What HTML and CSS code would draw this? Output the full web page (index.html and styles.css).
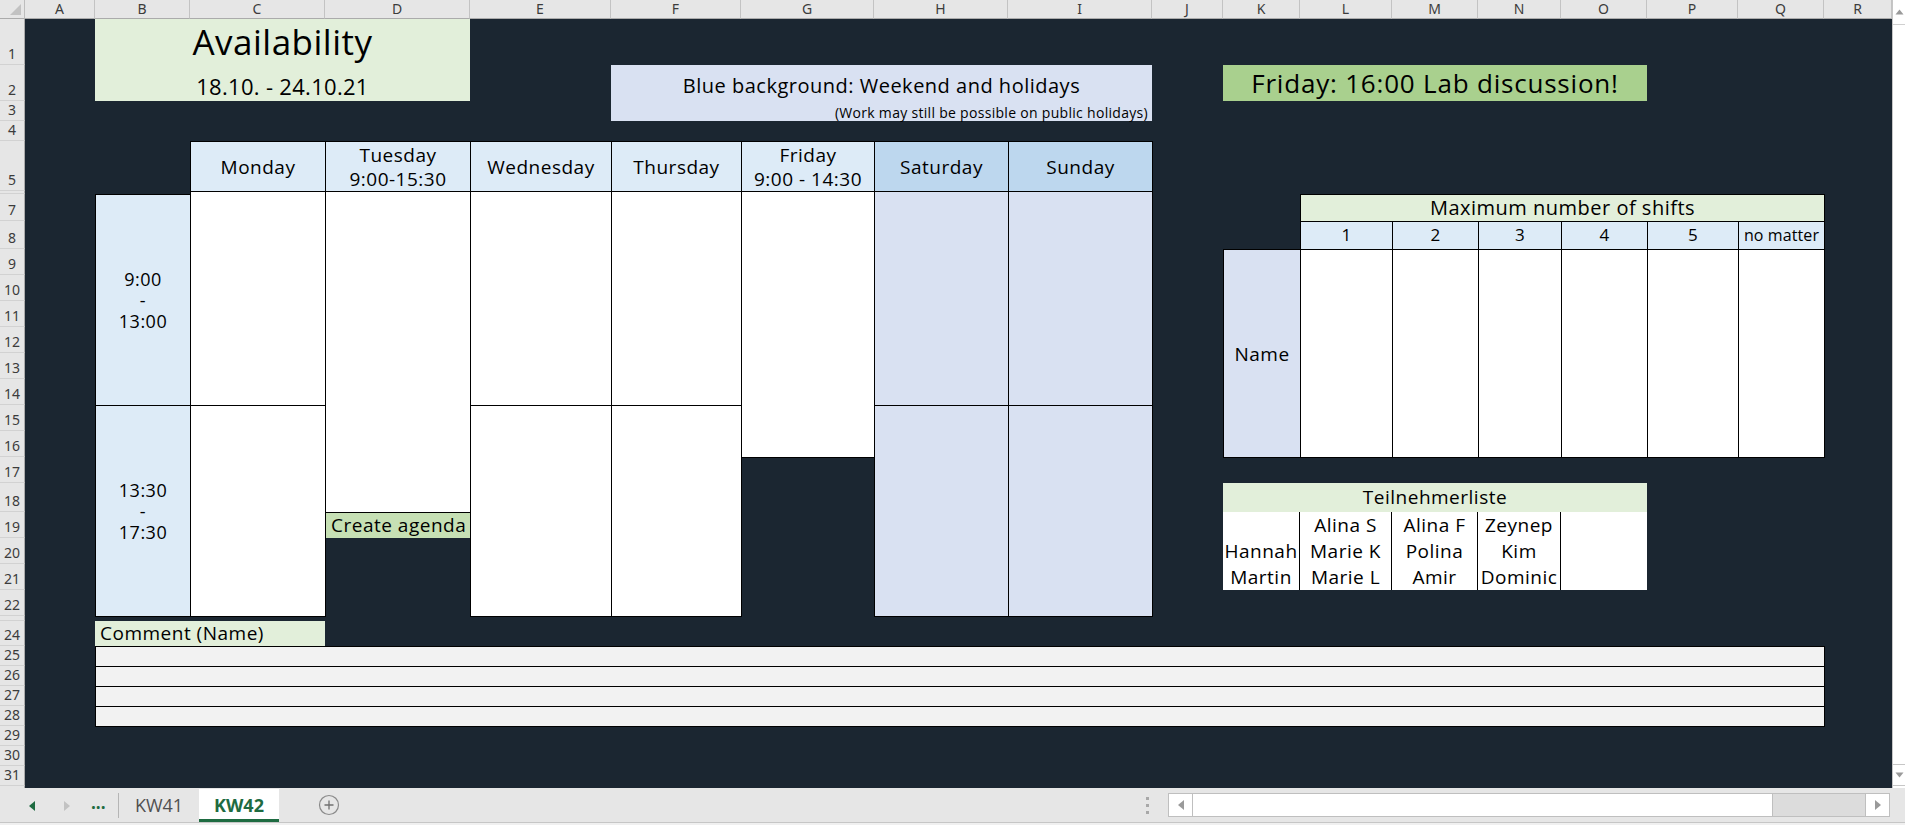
FILE: index.html
```html
<!DOCTYPE html>
<html lang="en">
<head>
<meta charset="utf-8">
<title>Availability – KW42</title>
<link rel="stylesheet" href="styles.css">
</head>
<body>
<div class="app">
  <div class="sheet">
    <div class="corner"><svg width="24" height="18" viewBox="0 0 24 18"><polygon points="21,4 21,15 10,15" fill="#c2c2c2"/></svg></div>
    <div class="ch">A</div><div class="ch">B</div><div class="ch">C</div><div class="ch">D</div><div class="ch">E</div><div class="ch">F</div><div class="ch">G</div><div class="ch">H</div><div class="ch">I</div><div class="ch">J</div><div class="ch">K</div><div class="ch">L</div><div class="ch">M</div><div class="ch">N</div><div class="ch">O</div><div class="ch">P</div><div class="ch">Q</div><div class="ch">R</div>

    <div class="rh">1</div><div class="rh">2</div><div class="rh">3</div><div class="rh">4</div><div class="rh">5</div><div class="rh"></div>
    <div class="rh">7</div><div class="rh">8</div><div class="rh">9</div><div class="rh">10</div><div class="rh">11</div><div class="rh">12</div><div class="rh">13</div><div class="rh">14</div><div class="rh">15</div><div class="rh">16</div><div class="rh">17</div><div class="rh">18</div><div class="rh">19</div><div class="rh">20</div><div class="rh">21</div><div class="rh">22</div>
    <div class="rh"></div><div class="rh">24</div><div class="rh">25</div><div class="rh">26</div><div class="rh">27</div><div class="rh">28</div><div class="rh">29</div><div class="rh">30</div><div class="rh">31</div><div class="rh"></div>

    <div class="vscroll">
      <div class="vbtn vup"><svg width="9" height="6" viewBox="0 0 9 6"><polygon points="4.5,0.5 8.5,5.5 0.5,5.5" fill="#9a9a9a"/></svg></div>
      <div class="vtrack"></div>
      <div class="vbtn vdown"><svg width="9" height="6" viewBox="0 0 9 6"><polygon points="0.5,0.5 8.5,0.5 4.5,5.5" fill="#9a9a9a"/></svg></div>
    </div>

    <!-- title & notes -->
    <div class="title">
      <div class="t-main">Availability</div>
      <div class="t-dates">18.10. - 24.10.21</div>
    </div>
    <div class="legend">
      <div class="lg-main">Blue background: Weekend and holidays</div>
      <div class="lg-sub">(Work may still be possible on public holidays)</div>
    </div>
    <div class="fri-note">Friday: 16:00 Lab discussion!</div>

    <!-- day headers -->
    <div class="bx dh colC">Monday</div>
    <div class="bx dh colD">Tuesday<br>9:00-15:30</div>
    <div class="bx dh colE">Wednesday</div>
    <div class="bx dh colF">Thursday</div>
    <div class="bx dh colG">Friday<br>9:00 - 14:30</div>
    <div class="bx dh we colH">Saturday</div>
    <div class="bx dh we colI">Sunday</div>

    <!-- time slots -->
    <div class="bx time colB time-am">9:00<br>-<br>13:00</div>
    <div class="bx time colB pm">13:30<br>-<br>17:30</div>

    <!-- schedule cells -->
    <div class="agenda">Create agenda</div>
    <div class="bx day colC am"></div>
    <div class="bx day colC pm"></div>
    <div class="bx day colD tue-long"></div>
    <div class="bx day colE am"></div>
    <div class="bx day colE pm"></div>
    <div class="bx day colF am"></div>
    <div class="bx day colF pm"></div>
    <div class="bx day colG fri-long"></div>
    <div class="bx day off colH am"></div>
    <div class="bx day off colH pm"></div>
    <div class="bx day off colI am"></div>
    <div class="bx day off colI pm"></div>

    <!-- comments -->
    <div class="cm-label">Comment (Name)</div>
    <div class="bx cm-row cm1"></div>
    <div class="bx cm-row cm2"></div>
    <div class="bx cm-row cm3"></div>
    <div class="bx cm-row cm4"></div>

    <!-- maximum shifts -->
    <div class="bx mx-head">Maximum number of shifts</div>
    <div class="bx mx-num colL">1</div>
    <div class="bx mx-num colM">2</div>
    <div class="bx mx-num colN">3</div>
    <div class="bx mx-num colO">4</div>
    <div class="bx mx-num colP">5</div>
    <div class="bx mx-num small colQ">no matter</div>
    <div class="bx mx-name">Name</div>
    <div class="bx mx-cell colL"></div>
    <div class="bx mx-cell colM"></div>
    <div class="bx mx-cell colN"></div>
    <div class="bx mx-cell colO"></div>
    <div class="bx mx-cell colP"></div>
    <div class="bx mx-cell colQ"></div>

    <!-- participants -->
    <div class="tl-head">Teilnehmerliste</div>
    <div class="tl-col sep colK"><span></span><span>Hannah</span><span>Martin</span></div>
    <div class="tl-col sep colL"><span>Alina S</span><span>Marie K</span><span>Marie L</span></div>
    <div class="tl-col sep colM"><span>Alina F</span><span>Polina</span><span>Amir</span></div>
    <div class="tl-col sep colN"><span>Zeynep</span><span>Kim</span><span>Dominic</span></div>
    <div class="tl-col colO"><span></span><span></span><span></span></div>
  </div>

  <div class="tabbar">
    <div class="tabnav">
      <span class="nav-l"><svg width="6" height="10" viewBox="0 0 6 10"><polygon points="6,0 6,10 0,5" fill="#1e6b41"/></svg></span>
      <span class="nav-r"><svg width="6" height="10" viewBox="0 0 6 10"><polygon points="0,0 0,10 6,5" fill="#c2c2c2"/></svg></span>
      <span class="nav-more">...</span>
    </div>
    <div class="tab">KW41</div>
    <div class="tab active">KW42</div>
    <div class="tab-add"><svg width="22" height="22" viewBox="0 0 22 22"><circle cx="11" cy="11" r="9.5" fill="none" stroke="#8a8a8a" stroke-width="1.2"/><path d="M11 6.5v9M6.5 11h9" stroke="#707070" stroke-width="1.3"/></svg></div>
    <div class="tab-space"></div>
    <div class="grip"><i></i><i></i><i></i></div>
    <div class="hscroll">
      <div class="hbtn"><svg width="6" height="10" viewBox="0 0 6 10"><polygon points="6,0 6,10 0,5" fill="#9a9a9a"/></svg></div>
      <div class="hthumb"></div>
      <div class="htrack"></div>
      <div class="hbtn"><svg width="6" height="10" viewBox="0 0 6 10"><polygon points="0,0 0,10 6,5" fill="#9a9a9a"/></svg></div>
    </div>
  </div>
  <div class="statusline"></div>
</div>
</body>
</html>
```

FILE: styles.css
```css
* { box-sizing: border-box; margin: 0; padding: 0; }
html, body { width: 1905px; height: 825px; overflow: hidden; }
body { background: #e6e6e6; font-family: "Open Sans", "DejaVu Sans", sans-serif; color: #000; }

.app { display: flex; flex-direction: column; width: 1905px; height: 825px; }

/* ---------- sheet grid ---------- */
.sheet {
  display: grid;
  grid-template-columns: 25px 70px 95px 135px 145px 141px 130px 133px 134px 144px 71px 77px 92px 86px 83px 86px 91px 86px 68px 13px;
  grid-template-rows: 19px 46px 36px 20px 20px 50px 3px 27px 28px repeat(8, 26px) 26px 29px repeat(4, 26px) 5px 25px repeat(7, 20px) 2px;
  height: 788px;
  background: #1b2631;
  letter-spacing: 0.5px;
}

.corner { grid-row: 1; grid-column: 1; background: #e6e6e6; border-right: 1px solid #bdbdbd; border-bottom: 1px solid #ababab; }
.corner svg { display: block; }

.ch {
  grid-row: 1;
  background: #e6e6e6;
  border-right: 1px solid #c3c3c3;
  border-bottom: 1px solid #ababab;
  font: 14px "Noto Sans", sans-serif;
  color: #3c3c3c;
  letter-spacing: 0;
  display: flex; align-items: center; justify-content: center;
  line-height: 18px;
}

.rh {
  grid-column: 1;
  background: #e6e6e6;
  border-right: 1px solid #ababab;
  border-bottom: 1px solid #d2d2d2;
  font: 14px "Noto Sans", sans-serif;
  color: #3c3c3c;
  letter-spacing: 0;
  line-height: 16px;
  display: flex; align-items: flex-end; justify-content: center;
  padding-bottom: 2px;
  overflow: hidden;
}

.vscroll {
  grid-column: 20; grid-row: 1 / -1;
  background: #fff;
  border-left: 1px solid #c6c6c6;
  display: flex; flex-direction: column;
}
.vbtn { display: flex; align-items: center; justify-content: center; background: #fff; }
.vup { height: 25px; border-bottom: 1px solid #d0d0d0; }
.vtrack { flex: 1; background: #fff; }
.vdown { height: 22px; border-top: 1px solid #c6c6c6; border-bottom: 1px solid #c6c6c6; margin-bottom: 2px; }

/* column placement */
.colB { grid-column: 3; }
.colC { grid-column: 4; }
.colD { grid-column: 5; }
.colE { grid-column: 6; }
.colF { grid-column: 7; }
.colG { grid-column: 8; }
.colH { grid-column: 9; }
.colI { grid-column: 10; }
.colK { grid-column: 12; }
.colL { grid-column: 13; }
.colM { grid-column: 14; }
.colN { grid-column: 15; }
.colO { grid-column: 16; }
.colP { grid-column: 17; }
.colQ { grid-column: 18; }

/* bordered cell: collapse shared borders */
.bx { border: 1px solid #000; margin: 0 -1px -1px 0; }

/* ---------- title / notes ---------- */
.title {
  grid-column: 3 / 6; grid-row: 2 / 4;
  background: #e2efda;
  display: flex; flex-direction: column; align-items: center;
}
.t-main { font-size: 35px; line-height: 46px; }
.t-dates { font-size: 22px; line-height: 36px; letter-spacing: 0.3px; padding-top: 3px; }

.legend {
  grid-column: 7 / 11; grid-row: 3 / 5;
  background: #d9e1f2;
  display: flex; flex-direction: column;
}
.lg-main { font-size: 20px; line-height: 36px; text-align: center; padding-top: 3px; }
.lg-sub { font-size: 14px; line-height: 17px; text-align: right; padding-right: 4px; letter-spacing: 0.3px; }

.fri-note {
  grid-column: 12 / 17; grid-row: 3 / 4;
  background: #a9d08e;
  font-size: 26px; line-height: 36px; letter-spacing: 0.8px;
  text-align: center;
}

/* ---------- schedule ---------- */
.dh {
  grid-row: 6 / 7;
  background: #ddebf7;
  font-size: 19px; line-height: 24px;
  display: flex; align-items: center; justify-content: center; text-align: center;
}
.dh.we { background: #bdd7ee; }

.time {
  background: #ddebf7;
  font-size: 18px; line-height: 21px;
  display: flex; align-items: center; justify-content: center; text-align: center;
}
.time-am { grid-row: 8 / 16; }
.am { grid-row: 7 / 16; }
.pm { grid-row: 16 / 24; }
.tue-long { grid-row: 7 / 20; }
.fri-long { grid-row: 7 / 18; }

.day { background: #fff; }
.day.off { background: #d9e1f2; }

.agenda {
  grid-column: 5; grid-row: 20 / 21;
  background: #c6e0b4;
  border-left: 1px solid #000;
  font-size: 19px; line-height: 26px;
  padding-left: 5px;
  white-space: nowrap;
}

/* ---------- comments ---------- */
.cm-label {
  grid-column: 3 / 5; grid-row: 25 / 26;
  background: #e2efda;
  font-size: 19px; line-height: 25px;
  padding-left: 5px;
}
.cm-row { grid-column: 3 / 19; background: #f2f2f2; }
.cm1 { grid-row: 26 / 27; }
.cm2 { grid-row: 27 / 28; }
.cm3 { grid-row: 28 / 29; }
.cm4 { grid-row: 29 / 30; }

/* ---------- max shifts ---------- */
.mx-head {
  grid-column: 13 / 19; grid-row: 8 / 9;
  background: #e2efda;
  font-size: 20px; line-height: 25px;
  text-align: center;
}
.mx-num {
  grid-row: 9 / 10;
  background: #ddebf7;
  font-size: 17px; line-height: 26px;
  text-align: center;
}
.mx-num.small { font-size: 16px; letter-spacing: 0.1px; white-space: nowrap; }
.mx-name {
  grid-column: 12 / 13; grid-row: 10 / 18;
  background: #d9e1f2;
  font-size: 19px;
  display: flex; align-items: center; justify-content: center;
}
.mx-cell { grid-row: 10 / 18; background: #fff; }

/* ---------- participants ---------- */
.tl-head {
  grid-column: 12 / 17; grid-row: 19 / 20;
  background: #e2efda;
  font-size: 19px; line-height: 29px;
  text-align: center;
}
.tl-col {
  grid-row: 20 / 23;
  background: #fff;
  display: flex; flex-direction: column;
  font-size: 19px;
}
.tl-col.sep { border-right: 1px solid #000; }
.tl-col span { height: 26px; line-height: 26px; text-align: center; white-space: nowrap; }

/* ---------- sheet tabs ---------- */
.tabbar {
  height: 34px;
  display: flex; align-items: stretch;
  background: #e6e6e6;
  font-family: "Open Sans", sans-serif;
}
.tabnav {
  width: 119px;
  display: flex; align-items: center;
  border-right: 1px solid #b5b5b5;
  margin: 5px 0 4px;
}
.nav-l { margin-left: 29px; display: flex; }
.nav-r { margin-left: 29px; display: flex; }
.nav-more { margin-left: 21px; font-size: 17px; font-weight: 700; color: #1e6b41; line-height: 16px; padding-bottom: 6px; }
.tab {
  width: 80px;
  display: flex; align-items: center; justify-content: center;
  font-size: 18px; color: #505050;
}
.tab.active {
  background: #fff;
  color: #1e6b41;
  font-weight: 700;
  border-bottom: 3px solid #1e6b41;
  margin-top: 1px;
  padding-top: 2px;
}
.tab-add { margin-left: 39px; display: flex; align-items: center; }
.tab-space { flex: 1; }
.grip { width: 4px; margin-right: 18px; display: flex; flex-direction: column; justify-content: center; gap: 4px; }
.grip i { display: block; width: 3px; height: 3px; background: #a8a8a8; }
.hscroll {
  width: 722px; margin: 5px 15px 5px 0;
  display: flex;
  border: 1px solid #bfbfbf;
  background: #fff;
}
.hbtn { width: 24px; display: flex; align-items: center; justify-content: center; background: #fff; }
.hbtn:first-child { border-right: 1px solid #bfbfbf; }
.hbtn:last-child { border-left: 1px solid #bfbfbf; }
.hthumb { width: 580px; background: #fff; border-right: 1px solid #bfbfbf; }
.htrack { flex: 1; background: #dcdcdc; }

.statusline { height: 3px; background: #f0f0f0; border-top: 1px solid #c6c6c6; }
```
